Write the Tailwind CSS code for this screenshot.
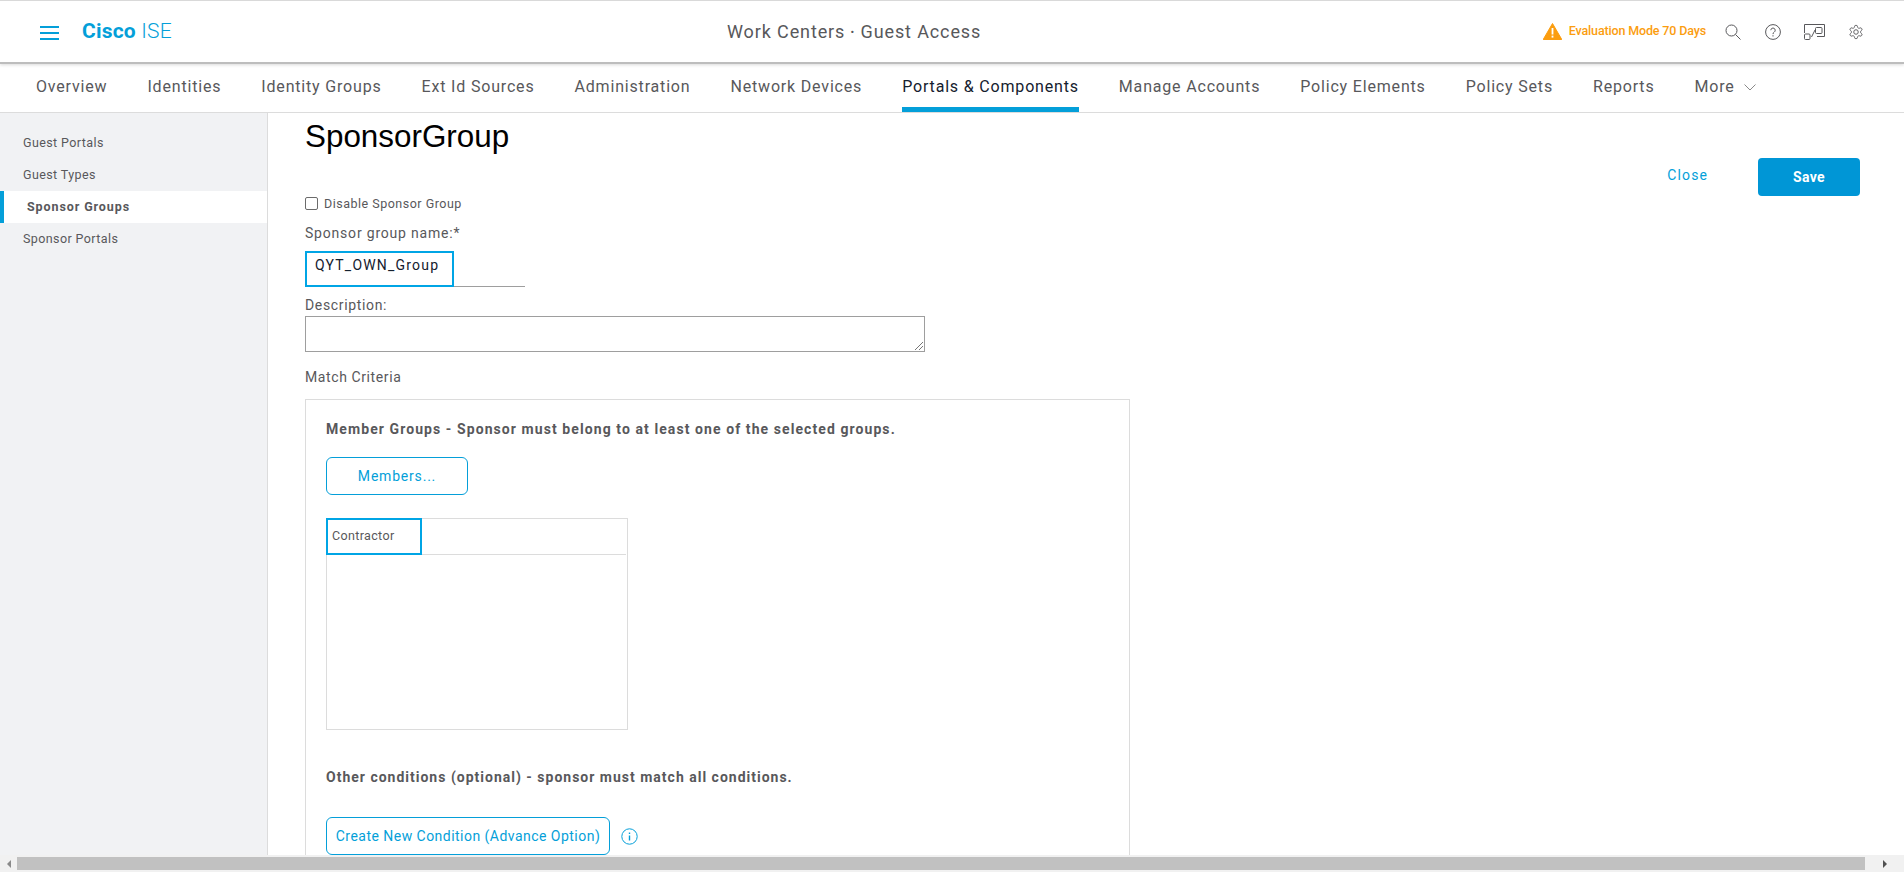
<!DOCTYPE html>
<html>

<head>
    <title>Cisco ISE</title>
    <meta charset="utf-8">
    <script src="https://cdn.jsdelivr.net/npm/@tailwindcss/browser@4"></script>
</head>

<body class="h-[872px] w-[1904px] overflow-hidden bg-white font-['Roboto',sans-serif] text-[#58585b] flex flex-col">
    <!-- header -->
    <header class="h-[64px] shrink-0 border-t border-[#d9d9d9] border-b-2 border-b-[#bdbdbd] flex items-center relative z-10 shadow-[0_1px_3px_rgba(0,0,0,0.15)]">
        <button class="ml-[40px] mt-[2px] w-[19px] flex flex-col gap-[4px]">
            <span class="h-[2px] bg-[#049fd9]"></span>
            <span class="h-[2px] bg-[#049fd9]"></span>
            <span class="h-[2px] bg-[#049fd9]"></span>
        </button>
        <div class="ml-[23px] mt-[1px] text-[21px] text-[#049fd9] tracking-[0.2px]"><span class="font-bold">Cisco</span> <span class="font-light">ISE</span></div>
        <div class="absolute left-[727px] top-[19px] text-[18px] leading-[24px] text-[#58585b] tracking-[0.88px]">Work Centers <span class="text-[11px] align-[2px]">•</span> Guest Access</div>
        <div class="ml-auto flex items-center">
            <svg class="w-[19px] h-[17px] mr-[7px]" viewBox="0 0 19 17">
                <path d="M9.5 0.5 L18.8 16.5 H0.2 Z" fill="#fb9d0f" stroke="#fb9d0f" stroke-linejoin="round"/>
                <rect x="8.6" y="5" width="1.8" height="6.5" fill="#fff"/>
                <rect x="8.6" y="12.6" width="1.8" height="2" fill="#fff"/>
            </svg>
            <span class="text-[12.5px] font-medium text-[#fb9d0f] tracking-[-0.15px] mr-[19px]">Evaluation Mode 70 Days</span>
            <svg class="w-[16px] h-[16px] mr-[24px]" viewBox="0 0 16 16" fill="none" stroke="#58585b" stroke-width="1">
                <circle cx="6.5" cy="6.5" r="5.5"/>
                <path d="M10.5 10.5 L15.5 15.5"/>
            </svg>
            <svg class="w-[16px] h-[16px] mr-[23px]" viewBox="0 0 16 16" fill="none" stroke="#58585b" stroke-width="1">
                <circle cx="8" cy="8" r="7.4"/>
                <path d="M5.8 6.2 a2.2 2.2 0 1 1 3.4 1.9 c-0.8 0.5 -1.2 1 -1.2 2"/>
                <path d="M8 11.2 v1.3"/>
            </svg>
            <svg class="w-[21px] h-[16px] mr-[23px]" viewBox="0 0 21 16" fill="none" stroke="#58585b" stroke-width="1">
                <path d="M0.5 9 V0.5 H20.5 V12.5 H13"/>
                <rect x="11.5" y="3.5" width="6.5" height="6" rx="1"/>
                <rect x="0.5" y="10" width="5.5" height="5.5" rx="1"/>
                <path d="M7.5 13 L11 6"/>
            </svg>
            <svg class="w-[16px] h-[16px] mr-[40px]" viewBox="0 0 24 24" fill="none" stroke="#58585b" stroke-width="1.4">
                <path d="M12.22 2h-.44a2 2 0 0 0-2 2v.18a2 2 0 0 1-1 1.73l-.43.25a2 2 0 0 1-2 0l-.15-.08a2 2 0 0 0-2.73.73l-.22.38a2 2 0 0 0 .73 2.73l.15.1a2 2 0 0 1 1 1.72v.51a2 2 0 0 1-1 1.74l-.15.09a2 2 0 0 0-.73 2.73l.22.38a2 2 0 0 0 2.73.73l.15-.08a2 2 0 0 1 2 0l.43.25a2 2 0 0 1 1 1.73V20a2 2 0 0 0 2 2h.44a2 2 0 0 0 2-2v-.18a2 2 0 0 1 1-1.73l.43-.25a2 2 0 0 1 2 0l.15.08a2 2 0 0 0 2.73-.73l.22-.39a2 2 0 0 0-.73-2.73l-.15-.08a2 2 0 0 1-1-1.74v-.5a2 2 0 0 1 1-1.74l.15-.09a2 2 0 0 0 .73-2.73l-.22-.38a2 2 0 0 0-2.73-.73l-.15.08a2 2 0 0 1-2 0l-.43-.25a2 2 0 0 1-1-1.73V4a2 2 0 0 0-2-2z"/>
                <circle cx="12" cy="12" r="3.4"/>
            </svg>
        </div>
    </header>

    <!-- tabs -->
    <nav class="h-[49px] shrink-0 border-b border-[#dcdcdc] flex items-stretch pl-[36px] gap-[40px] text-[16px] tracking-[0.82px] text-[#58585b]">
        <a class="flex items-center pb-[2px]">Overview</a>
        <a class="flex items-center pb-[2px]">Identities</a>
        <a class="flex items-center pb-[2px]">Identity Groups</a>
        <a class="flex items-center pb-[2px]">Ext Id Sources</a>
        <a class="flex items-center pb-[2px]">Administration</a>
        <a class="flex items-center pb-[2px]">Network Devices</a>
        <a class="flex items-center text-[#14202e] border-b-[5px] border-[#049fd9] pt-[3px]">Portals &amp; Components</a>
        <a class="flex items-center pb-[2px]">Manage Accounts</a>
        <a class="flex items-center pb-[2px]">Policy Elements</a>
        <a class="flex items-center pb-[2px]">Policy Sets</a>
        <a class="flex items-center pb-[2px]">Reports</a>
        <a class="flex items-center gap-[9px] pb-[2px]">More
            <svg class="w-[12px] h-[7px]" viewBox="0 0 12 7" fill="none" stroke="#8a8a8a"><path d="M0.5 0.5 L6 6 L11.5 0.5"/></svg>
        </a>
    </nav>

    <div class="flex-1 flex min-h-0">
        <!-- left menu -->
        <aside class="w-[268px] shrink-0 bg-[#f1f2f4] border-r border-[#dcdcdc] pt-[14px] text-[12.5px] tracking-[0.4px]">
            <div class="h-[32px] pl-[23px] flex items-center">Guest Portals</div>
            <div class="h-[32px] pl-[23px] flex items-center">Guest Types</div>
            <div class="h-[32px] pl-[23px] flex items-center bg-white border-l-[4px] border-[#049fd9] font-bold tracking-[0.9px]">Sponsor Groups</div>
            <div class="h-[32px] pl-[23px] flex items-center">Sponsor Portals</div>
        </aside>

        <!-- page content -->
        <main class="flex-1 min-w-0 overflow-hidden pl-[37px] pr-[44px]">
            <div class="flex justify-between">
                <h1 class="font-['Liberation_Sans',sans-serif] text-[31.4px] leading-[36px] text-black mt-[6px]">SponsorGroup</h1>
                <div class="flex items-center mt-[45px] h-[38px]">
                    <a class="text-[#049fd9] text-[14px] tracking-[1.1px] mr-[50px] pb-[4px]">Close</a>
                    <button class="w-[102px] h-[38px] rounded-[4px] bg-[#0096d6] text-white text-[14px] font-bold tracking-[0.4px]">Save</button>
                </div>
            </div>
            <label class="flex items-center -mt-[1px] h-[16px]">
                <span class="w-[13px] h-[13px] border border-[#6b6b6b] rounded-[2px] bg-white"></span>
                <span class="ml-[6px] mt-[2px] text-[12.5px] tracking-[0.5px]">Disable Sponsor Group</span>
            </label>
            <div class="mt-[13px] text-[14px] leading-[18px] tracking-[0.8px]">Sponsor group name:*</div>
            <div class="mt-[9px] w-[220px] h-[36px] border-b border-[#9e9e9e]">
                <div class="w-[149px] h-[36px] border-2 border-[#00a5e5] pl-[8px] pt-[3px] text-[14px] leading-[18px] tracking-[1.2px] text-[#14202e]">QYT_OWN_Group</div>
            </div>
            <div class="mt-[9px] text-[14px] leading-[18px] tracking-[0.65px]">Description:</div>
            <div class="mt-[2px] w-[620px] h-[36px] border border-[#9e9e9e] relative">
                <svg class="absolute right-[1px] bottom-[1px] w-[8px] h-[8px]" viewBox="0 0 8 8" stroke="#777"><path d="M0 8 L8 0 M4 8 L8 4"/></svg>
            </div>
            <div class="mt-[16px] text-[14px] leading-[18px] tracking-[0.6px]">Match Criteria</div>
            <section class="mt-[13px] w-[825px] border border-[#dcdcdc] pl-[20px] pt-[20px] h-[600px]">
                <h3 class="text-[14px] leading-[18px] font-bold tracking-[1.08px]">Member Groups - Sponsor must belong to at least one of the selected groups.</h3>
                <button class="mt-[19px] w-[142px] h-[38px] rounded-[6px] border border-[#049fd9] text-[#049fd9] text-[14px] tracking-[0.8px] block">Members...</button>
                <div class="mt-[23px] w-[302px] h-[212px] border border-[#dcdcdc]">
                    <div class="w-[299px] h-[37px] border-b border-[#dcdcdc]">
                        <div class="-mt-px -ml-px w-[96px] h-[37px] border-2 border-[#00a5e5] pl-[4px] flex items-center text-[12.5px] tracking-[0.36px]">Contractor</div>
                    </div>
                </div>
                <h3 class="mt-[38px] text-[14px] leading-[18px] font-bold tracking-[1px]">Other conditions (optional) - sponsor must match all conditions.</h3>
                <div class="mt-[31px] flex items-center">
                    <button class="w-[284px] h-[38px] rounded-[6px] border border-[#049fd9] text-[#049fd9] text-[14px] tracking-[0.47px]">Create New Condition (Advance Option)</button>
                    <svg class="ml-[11px] w-[17px] h-[17px]" viewBox="0 0 17 17" fill="none" stroke="#049fd9">
                        <circle cx="8.5" cy="8.5" r="7.7"/>
                        <path d="M8.5 7.5 V12.5" stroke-width="1.4"/>
                        <path d="M8.5 4.5 V6" stroke-width="1.4"/>
                    </svg>
                </div>
            </section>
        </main>
    </div>

    <!-- page scrollbar -->
    <div class="h-[17px] shrink-0 bg-[#f1f1f1] flex items-center relative z-10">
        <div class="w-[17px] flex justify-center">
            <span class="w-0 h-0 border-y-[4px] border-y-transparent border-r-[4px] border-r-[#8a8a8a]"></span>
        </div>
        <div class="w-[1848px] h-[13px] bg-[#c1c1c1]"></div>
        <div class="flex-1 flex justify-center">
            <span class="w-0 h-0 border-y-[4px] border-y-transparent border-l-[4px] border-l-[#505050]"></span>
        </div>
    </div>
</body>

</html>
